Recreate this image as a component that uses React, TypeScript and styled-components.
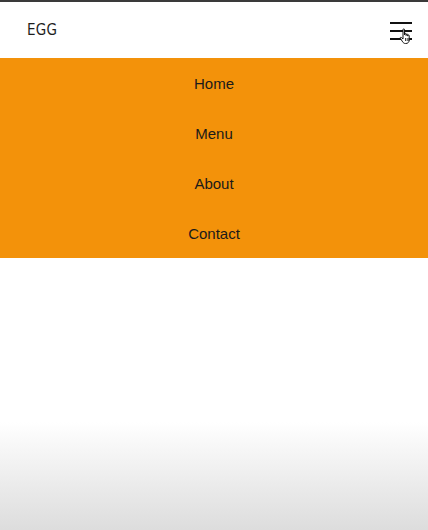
import React from "react";
import styled, { createGlobalStyle } from "styled-components";

const Global = createGlobalStyle`
  html, body { margin: 0; padding: 0; }
  body {
    font-family: "Liberation Sans", Arial, sans-serif;
    background: #fff;
  }
`;

const Page = styled.div`
  min-height: 530px;
  display: flex;
  flex-direction: column;
  border-top: 2px solid #3a3a3a;
  box-sizing: border-box;
  background: linear-gradient(to bottom, #fff 0px, #fff 420px, #dcdcdc 530px);
`;

const Header = styled.header`
  height: 56px;
  display: flex;
  align-items: center;
  justify-content: space-between;
  padding: 0 16px 0 27px;
  background: #fff;
`;

const Logo = styled.div`
  font-family: "Liberation Sans Narrow", "DejaVu Sans Condensed", sans-serif;
  font-size: 15px;
  color: #1e1e1e;
  letter-spacing: 0.2px;
`;

const Burger = styled.button`
  position: relative;
  width: 22px;
  height: 18px;
  margin-top: 1px;
  padding: 0;
  border: none;
  background: none;
  display: flex;
  flex-direction: column;
  justify-content: space-between;
  cursor: pointer;
`;

const Line = styled.span`
  display: block;
  height: 2px;
  width: 22px;
  background: #111;
`;

const Cursor = styled.svg`
  position: absolute;
  left: 9px;
  top: 6px;
`;

const Nav = styled.nav`
  background: #f3920a;
  display: flex;
  flex-direction: column;
`;

const NavItem = styled.a`
  height: 50px;
  display: flex;
  align-items: center;
  justify-content: center;
  font-size: 15px;
  color: #1a1a1a;
  text-decoration: none;
`;

export default function App() {
  return (
    <>
      <Global />
      <Page>
        <Header>
          <Logo>EGG</Logo>
          <Burger aria-label="menu">
            <Line />
            <Line />
            <Line />
            <Cursor width="15" height="17" viewBox="0 0 15 17">
              <path
                d="M4 1.5c0-.8 1.5-.8 1.5 0V7l.2-1.2c.2-.7 1.4-.6 1.4.1V7.5l.2-1c.2-.7 1.4-.6 1.4.1v1.5l.2-.7c.2-.7 1.3-.5 1.3.2V12c0 2-1.3 3.5-3.3 3.5H6.4c-1.3 0-2-.6-2.7-1.6L1.3 10.3c-.4-.7.5-1.4 1.1-.8L4 11V1.5z"
                fill="#fff"
                stroke="#111"
                strokeWidth="1"
                strokeLinejoin="round"
              />
              <path d="M6.5 10v3M8.2 10v3M9.9 10v3" stroke="#111" strokeWidth="0.8" />
            </Cursor>
          </Burger>
        </Header>
        <Nav>
          <NavItem href="#">Home</NavItem>
          <NavItem href="#">Menu</NavItem>
          <NavItem href="#">About</NavItem>
          <NavItem href="#">Contact</NavItem>
        </Nav>
      </Page>
    </>
  );
}
